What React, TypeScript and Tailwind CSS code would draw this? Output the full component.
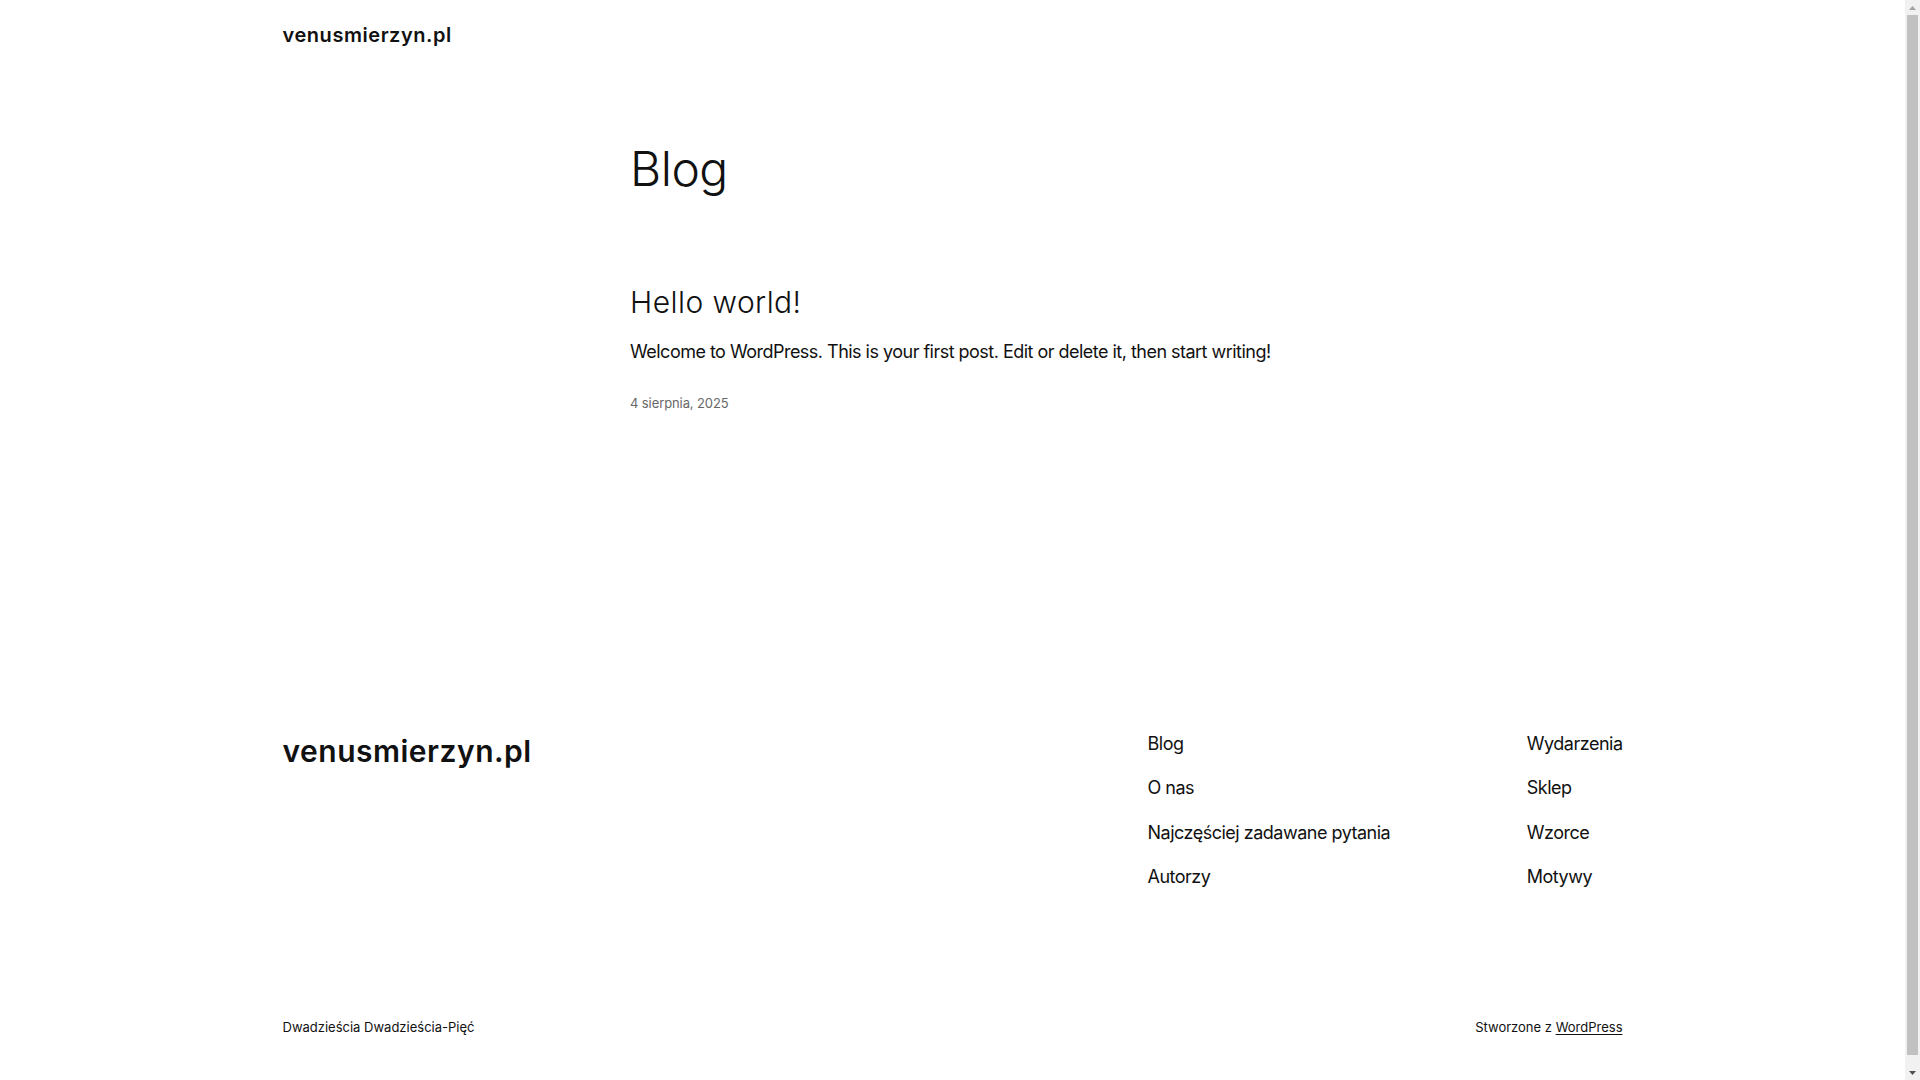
const footerNavLeft = ['Blog', 'O nas', 'Najczęściej zadawane pytania', 'Autorzy'];
const footerNavRight = ['Wydarzenia', 'Sklep', 'Wzorce', 'Motywy'];

function SiteHeader() {
  return (
    <header className="mx-auto w-[1340px] py-5">
      <a href="#" className="text-[20px] leading-[30px] font-semibold tracking-[0.55px] text-[#111111]">
        venusmierzyn.pl
      </a>
    </header>
  );
}

function PostList() {
  return (
    <main className="mx-auto w-[645px] pt-[70px]">
      <h1 className="text-[48px] leading-[58px] font-light tracking-[-0.5px] text-[#111111]">Blog</h1>

      <article className="mt-[86px]">
        <h2 className="text-[30px] leading-[36px] font-light tracking-[0.45px] text-[#111111]">
          <a href="#">Hello world!</a>
        </h2>
        <p className="mt-[19px] whitespace-nowrap text-[18px] leading-[25px] tracking-[-0.52px] text-[#111111]">
          Welcome to WordPress. This is your first post. Edit or delete it, then start writing!
        </p>
        <div className="mt-[29px] text-[13px] leading-[20px] tracking-[-0.1px] text-[#686868]">4 sierpnia, 2025</div>
      </article>
    </main>
  );
}

function SiteFooter() {
  return (
    <footer className="mx-auto w-[1340px] pt-[320px] pb-[51px]">
      <div className="flex items-start justify-between">
        <a href="#" className="text-[30px] leading-[36px] font-semibold tracking-[0.5px] text-[#111111]">
          venusmierzyn.pl
        </a>

        <nav className="-mt-[2px] flex w-[475px] justify-between text-[18px] leading-[25px] tracking-[-0.5px] text-[#111111]">
          <ul className="flex flex-col gap-[19.4px]">
            {footerNavLeft.map((item) => (
              <li key={item}>
                <a href="#">{item}</a>
              </li>
            ))}
          </ul>
          <ul className="flex flex-col gap-[19.4px]">
            {footerNavRight.map((item) => (
              <li key={item}>
                <a href="#">{item}</a>
              </li>
            ))}
          </ul>
        </nav>
      </div>

      <div className="mt-[128px] flex justify-between text-[13px] leading-[20px] text-[#111111]">
        <span>Dwadzieścia Dwadzieścia-Pięć</span>
        <span>
          Stworzone z{' '}
          <a href="#" className="underline underline-offset-2">
            WordPress
          </a>
        </span>
      </div>
    </footer>
  );
}

// browser scrollbar as it appears in the screenshot
function Scrollbar() {
  return (
    <div className="fixed top-0 right-0 flex h-screen w-[15px] flex-col bg-[#f1f1f1]">
      <div className="flex h-[15px] items-center justify-center">
        <svg width="7" height="4" viewBox="0 0 7 4">
          <path d="M3.5 0 7 4H0z" fill="#a3a3a3" />
        </svg>
      </div>
      <div className="mx-[2px] mb-[10px] flex-1 bg-[#c1c1c1]" />
      <div className="flex h-[15px] items-center justify-center">
        <svg width="7" height="4" viewBox="0 0 7 4">
          <path d="M0 0h7L3.5 4z" fill="#505050" />
        </svg>
      </div>
    </div>
  );
}

export default function App() {
  return (
    <div className="min-h-screen bg-white pr-[15px] font-['Inter',sans-serif] text-[#111111] antialiased">
      <SiteHeader />
      <PostList />
      <SiteFooter />
      <Scrollbar />
    </div>
  );
}
